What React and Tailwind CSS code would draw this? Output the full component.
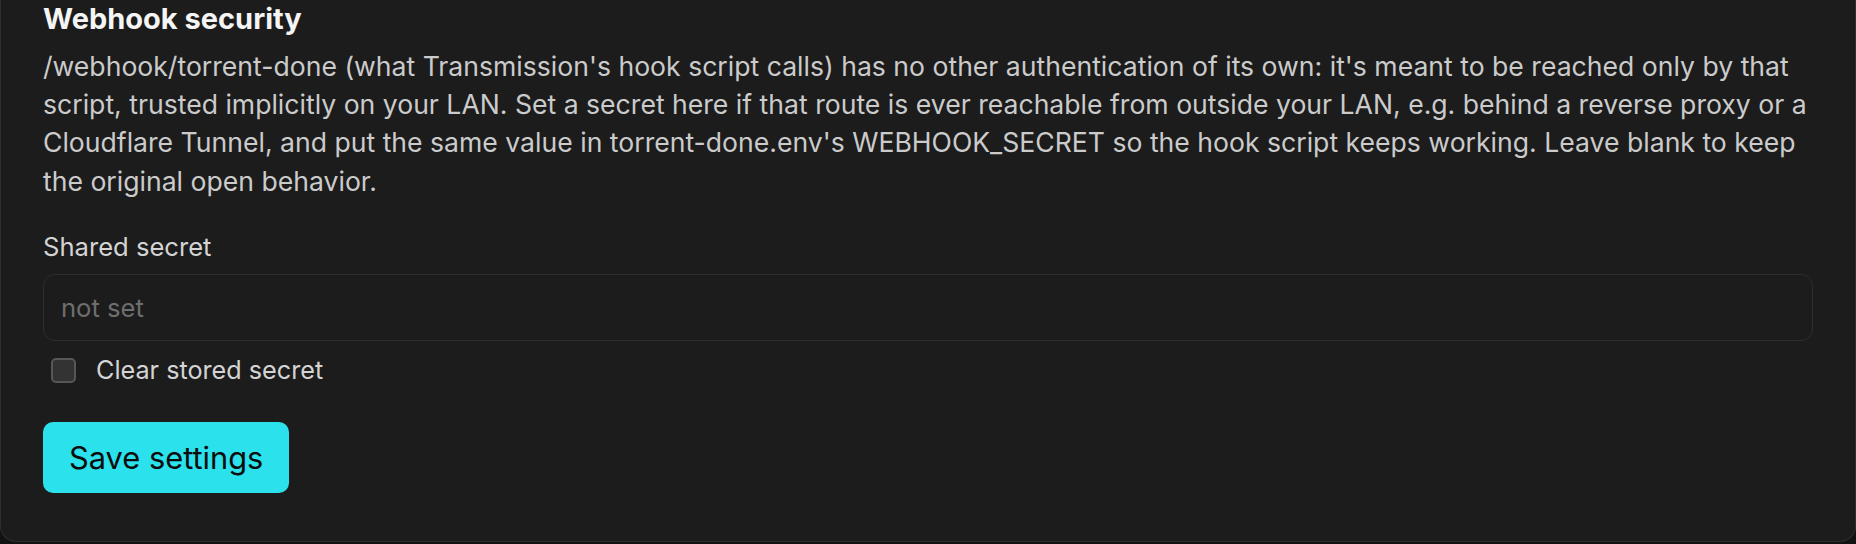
const App = () => {
    return (
        <div className="min-h-screen bg-[#121212] font-['Inter','Liberation_Sans',sans-serif]">
            <div className="h-[542px] bg-[#1c1c1c] border border-t-0 border-[#2e2e2e] rounded-b-[16px] px-[42px]">
                <h2 className="text-[29px] leading-[38px] font-bold text-[#f5f5f5]">Webhook security</h2>
                <p className="mt-[8.5px] text-[26.6px] leading-[38.4px] text-[#cbcbcb]">
                    /webhook/torrent-done (what Transmission's hook script calls) has no other authentication of its own: it's meant to be reached only by that script, trusted implicitly on your LAN. Set a secret here if that route is ever reachable from outside your LAN, e.g. behind a reverse proxy or a Cloudflare Tunnel, and put the same value in torrent-done.env's WEBHOOK_SECRET so the hook script keeps working. Leave blank to keep the original open behavior.
                </p>

                <label className="block mt-[27.4px] text-[25.6px] leading-[38.4px] text-[#d4d4d4]">Shared secret</label>
                <input
                    type="text"
                    placeholder="not set"
                    className="mt-[8.4px] w-full h-[66.4px] px-[17px] rounded-[12px] bg-[#1c1c1c] border border-[#2e2e2e] text-[25.6px] text-[#e5e5e5] placeholder:text-[#6e6e6e] outline-none"
                />

                <div className="mt-[10.6px] flex items-center h-[38.4px]">
                    <span className="ml-[8px] w-[25px] h-[25px] rounded-[5px] bg-[#333333] border-2 border-[#575757]" />
                    <span className="ml-[20px] text-[25.2px] text-[#d4d4d4]">Clear stored secret</span>
                </div>

                <button className="mt-[32.3px] h-[71.5px] px-[26px] rounded-[10px] bg-[#2ae1ec] text-[#0d0d0d] text-[30.8px]">
                    Save settings
                </button>
            </div>
        </div>
    );
};

export default App;
